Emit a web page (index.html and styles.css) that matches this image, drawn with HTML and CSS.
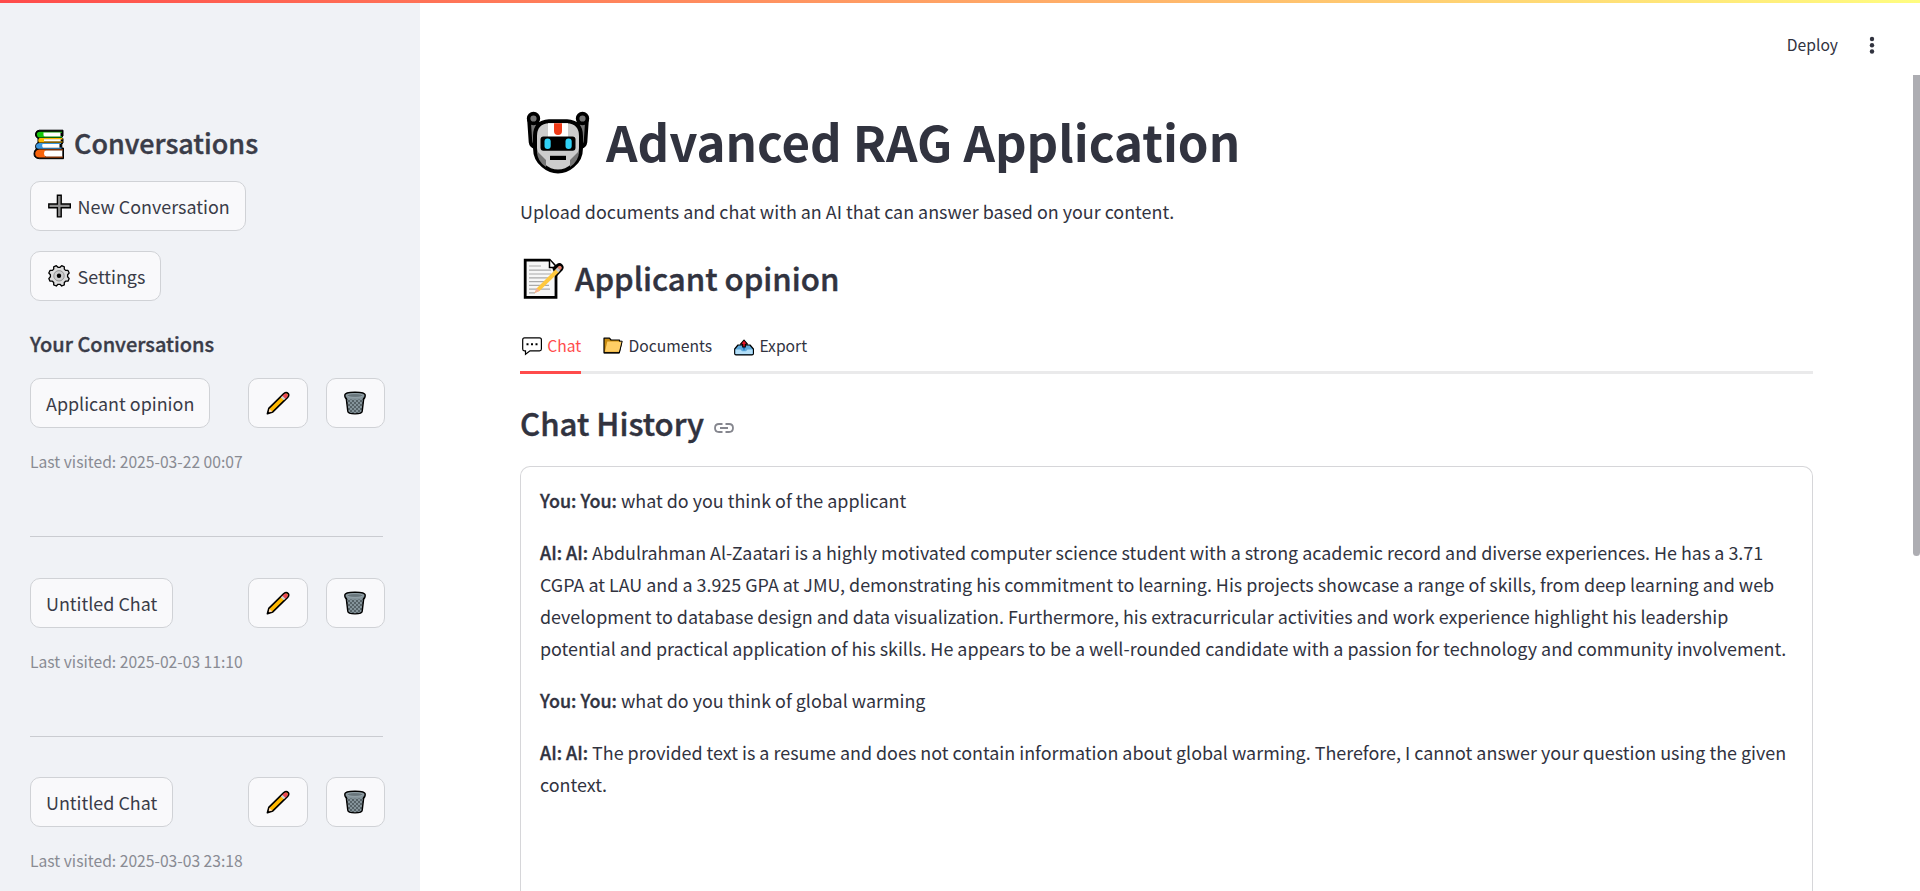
FILE: index.html
```html
<!DOCTYPE html>
<html lang="en">
<head>
<meta charset="utf-8">
<title>Advanced RAG Application</title>
<link rel="stylesheet" href="styles.css">
</head>
<body>
<svg class="defs" width="0" height="0" aria-hidden="true">
  <defs>
    <pattern id="mesh" width="4" height="4" patternUnits="userSpaceOnUse">
      <path d="M0 0L4 4M4 0L0 4" stroke="#4a555b" stroke-width=".8"/>
    </pattern>
    <symbol id="pencil" viewBox="0 0 24 24">
      <path d="M1.4 22.800L2.800 17.400 17.800 2.600Q20.300.800 22.200 2.500 23.500 4.300 21.600 6.400L6.800 20.900Z" fill="#ffb900" stroke="#000" stroke-width="1.600" stroke-linejoin="round"/>
      <path d="M16.300 5L18.300 3.100Q20 2 21.400 3.200 22.500 4.500 20.900 6.200L19.200 7.900Z" fill="#e74856"/>
      <path d="M14.800 6.400L16.400 4.900 19.400 7.800 17.800 9.300Z" fill="#ccd1d4"/>
      <path d="M2.500 21.400L3.500 17.900 6.300 20.500Z" fill="#ffd9b8"/>
      <path d="M1.200 22.900L1.900 20 4.100 22Z"/>
    </symbol>
    <symbol id="trash" viewBox="0 0 24 24">
      <path d="M3 5.5L4.8 20.3Q5 22.8 12 22.8T19.2 20.3L21 5.5Z" fill="#84939a"/>
      <path d="M3 8L4.800 20.300Q5 22.800 12 22.800T19.200 20.300L21 8Z" fill="url(#mesh)"/>
      <path d="M3.2 6.8L4.8 20.3Q5 22.9 12 22.9T19.2 20.3L20.8 6.8" fill="none" stroke="#000" stroke-width="1.4"/>
      <path d="M1.8 3.9Q2 1.2 12 1.2T22.2 3.9Q22.3 7.6 20 7.9 12 9.4 4 7.9 1.7 7.6 1.8 3.9Z" fill="#84939a"/>
      <path d="M4 8Q1.6 7.4 1.8 3.9 2 1.2 12 1.2T22.2 3.9Q22.3 7.4 20 8" fill="none" stroke="#000" stroke-width="1.4"/>
      <ellipse cx="12" cy="4.5" rx="8" ry="1.9" fill="#68757b" stroke="#a2b0b6" stroke-width=".7"/>
    </symbol>
  </defs>
</svg>

<div class="decoration"></div>

<div class="app">
  <aside class="sidebar">
    <h2 class="side-title">
      <svg class="books" viewBox="0 0 32 32">
        <path d="M6.2 1.2H30V7L28.8 8V9.5H30V14L28.8 15V19H30.5V29.7H6.5Q1 29.5 1 24.8 1 21.5 3.2 20 1.5 15.5 5 13.5V9.5Q2 8 2.4 4.8 3 1.4 6.2 1.2Z" fill="#000" stroke="#000" stroke-width="1"/>
        <path d="M29 2.8H7Q3.8 3 3.8 5.6 4 8.3 6.5 8.5H29V7.3H11V3.8H29Z" fill="#16c60c"/>
        <path d="M10.5 3.6H27.5V7.6H12Q10.5 7.6 10.5 6Z" fill="#fff"/>
        <path d="M29.500 9H6.500Q4.200 11 6 13.600H29.500V12.500H11V10.500H29.500Z" fill="#ffb900"/>
        <path d="M11 10.200H27.700V12.300H11Z" fill="#fff"/>
        <path d="M28 14H7Q3 14.3 3 17 3 19.8 5.5 19.8H28.5V18.6H10V15H28Z" fill="#3a96dd"/>
        <path d="M9.500 15H26.500V18.800H10Q8.500 17 9.500 15Z" fill="#fff"/>
        <path d="M29.8 20.5H6.5Q2.2 21 2.2 24.8 2.2 28.3 6.5 28.5H29.8V27.6H12V21.5H29.8Z" fill="#f7630c"/>
        <path d="M12.500 21.400H29.300V27.400H13Q11 26.800 11 24.400T12.500 21.400Z" fill="#fff"/>
      </svg>
      <span>Conversations</span>
    </h2>
    <button class="btn">
      <svg class="btn-icon" viewBox="0 0 26 26"><path d="M11.400 2.300H15.200V11H24.300V14.800H15.200V23.900H11.400V14.800H2.800V11H11.400Z" fill="#8e8e8e" stroke="#000" stroke-width="1.400"/></svg>
      <span>New Conversation</span>
    </button>
    <button class="btn">
      <svg class="btn-icon" viewBox="0 0 26 26">
        <path d="M10.3 2.7L12 4.3H14L15.7 2.7 18.3 3.8V6.1L19.6 7.4H22L23.2 10 21.6 11.8V13.8L23.2 15.6 22 18.2H19.6L18.3 19.5V21.9L15.7 23 14 21.3H12L10.3 23 7.7 21.9V19.5L6.4 18.2H4L2.8 15.6 4.4 13.8V11.8L2.8 10 4 7.4H6.4L7.7 6.1V3.8Z" fill="#dcdcdc" stroke="#000" stroke-width="1.3" stroke-linejoin="round"/>
        <circle cx="13" cy="12.8" r="5.2" fill="#ccc" stroke="#8b8b8b" stroke-width=".9"/>
        <circle cx="13" cy="12.8" r="2.2"/>
      </svg>
      <span>Settings</span>
    </button>
    <h3 class="side-sub">Your Conversations</h3>

    <section class="conv">
      <div class="conv-row">
        <div><button class="btn">Applicant opinion</button></div>
        <button class="btn icon-only"><svg viewBox="0 0 24 24"><use href="#pencil"/></svg></button>
        <button class="btn icon-only"><svg viewBox="0 0 24 24"><use href="#trash"/></svg></button>
      </div>
      <p class="caption">Last visited: 2025-03-22 00:07</p>
    </section>
    <section class="conv">
      <div class="conv-row">
        <div><button class="btn">Untitled Chat</button></div>
        <button class="btn icon-only"><svg viewBox="0 0 24 24"><use href="#pencil"/></svg></button>
        <button class="btn icon-only"><svg viewBox="0 0 24 24"><use href="#trash"/></svg></button>
      </div>
      <p class="caption">Last visited: 2025-02-03 11:10</p>
    </section>
    <section class="conv">
      <div class="conv-row">
        <div><button class="btn">Untitled Chat</button></div>
        <button class="btn icon-only"><svg viewBox="0 0 24 24"><use href="#pencil"/></svg></button>
        <button class="btn icon-only"><svg viewBox="0 0 24 24"><use href="#trash"/></svg></button>
      </div>
      <p class="caption">Last visited: 2025-03-03 23:18</p>
    </section>
  </aside>

  <div class="view">
    <header class="toolbar">
      <span>Deploy</span>
      <svg class="kebab" viewBox="0 0 6 18"><circle cx="3" cy="3" r="2.2"/><circle cx="3" cy="9.2" r="2.2"/><circle cx="3" cy="15.5" r="2.2"/></svg>
    </header>

    <main class="content">
      <h1 class="title">
        <svg class="robot" viewBox="0 0 64 64">
          <path d="M3 9L4.500 31Q5 35 9 36L14 34 12.500 15 10 8ZM61 9L59.500 31Q59 35 55 36L50 34 51.500 15 54 8Z" fill="#767676" stroke="#000" stroke-width="3.600" stroke-linejoin="round"/>
          <circle cx="7.500" cy="7.500" r="4.900" fill="#767676" stroke="#000" stroke-width="3.600"/>
          <circle cx="56.500" cy="7.500" r="4.900" fill="#767676" stroke="#000" stroke-width="3.600"/>
          <path d="M32 10.200H23Q9 11 9 25V37Q9 48 17 54.500 24 60.500 32 60.500T47 54.500Q55 48 55 37V25Q55 11 41 10.200Z" fill="#ccc" stroke="#000" stroke-width="4"/>
          <path d="M11 40L20 49V56Q11 50 11 40ZM53 40L44 49V56Q53 50 53 40Z" fill="#767676"/>
          <path d="M22 12.200H42V26H22Z" fill="#fff"/>
          <path d="M28 12.200H36V20Q36 24 32 24T28 20Z" fill="#f03a17"/>
          <rect x="14.500" y="25.500" width="35" height="14.300" rx="3"/>
          <rect x="18.500" y="27.500" width="6.200" height="10.500" rx="3" fill="#31d2f7"/>
          <rect x="39.500" y="27.500" width="6.200" height="10.500" rx="3" fill="#31d2f7"/>
          <rect x="24" y="44.800" width="16" height="4.200"/>
        </svg>
        <span>Advanced RAG Application</span>
      </h1>
      <p class="lead">Upload documents and chat with an AI that can answer based on your content.</p>
      <h2 class="heading">
        <svg class="memo" viewBox="0 0 42 42">
          <path d="M2.200 2.200H26.500L33 9V39.300H2.200Z" fill="#f7f7f7" stroke="#000" stroke-width="2.800"/>
          <path d="M26.500 2V9.500H33" fill="#fff" stroke="#000" stroke-width="1.500"/>
          <path d="M6 8H18M6 12.200H28M6 16H28M6 19.800H27M6 23.600H24M6 27.400H26M6 31.200H27M6 34.800H12" stroke="#aaa" stroke-width="1.200"/>
          <path d="M31 10.500L34.500 7.500Q36.500 5.800 38.300 7.500 40 9.300 38.300 11.500L33.500 16.500Z" fill="#000" stroke="#000" stroke-width="3" stroke-linejoin="round"/>
          <path d="M14 30L33.500 10.500 36.500 13.500 16.500 33 11.500 35Z" fill="#ffc83d"/>
          <path d="M11.500 35.200L13.700 30 16.500 32.800Z" fill="#f3ad9c"/>
          <path d="M32.500 11.500L34.700 9.300 37.500 12 35.300 14.200Z" fill="#c9c9c9"/>
          <path d="M34.500 9.500L35.500 8.300Q37 7 38.300 8.500T38.200 11L37.300 12Z" fill="#e8836b"/>
        </svg>
        <span>Applicant opinion</span>
      </h2>

      <nav class="tabs">
        <a class="tab active">
          <svg class="tab-icon" viewBox="0 0 22 20"><path d="M3.500 1.900H18.500Q20.400 1.900 20.400 3.800V13Q20.400 14.800 18.500 14.800H9L4.500 18.200V14.800H3.300Q1.700 14.800 1.700 13V3.800Q1.700 1.900 3.500 1.900Z" fill="#fff" stroke="#000" stroke-width="1.200"/><path d="M5.500 7.300h2v2h-2zM10 7.300h2v2h-2zM14.500 7.300h2v2h-2z"/></svg>
          <span>Chat</span>
        </a>
        <a class="tab">
          <svg class="tab-icon" viewBox="0 0 22 20"><path d="M2 2.200H7.500L9 4H17.500V7L18.700 6.500H19.500L17.200 16.800H2Z" fill="#c98c10" stroke="#000" stroke-width="1.200" stroke-linejoin="round"/><path d="M5.300 5.500H20.300L17.400 15.800H2.900Z" fill="#ffce65"/><path d="M17.500 5.200H20.200L17.300 16.800H2" fill="none" stroke="#000" stroke-width="1"/></svg>
          <span>Documents</span>
        </a>
        <a class="tab">
          <svg class="tab-icon" viewBox="0 0 22 20"><path d="M1.700 13L5 9H17L20.400 13V17.500Q20.400 18.900 19 18.900H3Q1.700 18.900 1.700 17.500Z" fill="#5ea9dc" stroke="#000" stroke-width="1.200" stroke-linejoin="round"/><path d="M2.500 13.500H7.500L9 15.300H13L14.500 13.500H19.600V18H2.500Z" fill="#b4dff8"/><path d="M9.200 10H12.800L11 15Z" fill="#1674c4"/><path d="M11 4L14.500 8.200H12.300V11H9.700V8.200H7.500Z" fill="#e81224" stroke="#000" stroke-width="1.100" stroke-linejoin="round"/></svg>
          <span>Export</span>
        </a>
      </nav>

      <h2 class="heading history">
        <span>Chat History</span>
        <svg class="link" viewBox="0 0 20 10"><path d="M8.500 1H5Q1 1 1 5T5 9H8.500M11.500 1H15Q19 1 19 5T15 9H11.500M6 5H14" fill="none" stroke="#85868e" stroke-width="1.800"/></svg>
      </h2>

      <section class="chat">
        <p><strong>You: You:</strong> what do you think of the applicant</p>
        <p><strong>AI: AI:</strong> Abdulrahman Al-Zaatari is a highly motivated computer science student with a strong academic record and diverse experiences. He has a 3.71 CGPA at LAU and a 3.925 GPA at JMU, demonstrating his commitment to learning. His projects showcase a range of skills, from deep learning and web development to database design and data visualization. Furthermore, his extracurricular activities and work experience highlight his leadership potential and practical application of his skills. He appears to be a well-rounded candidate with a passion for technology and community involvement.</p>
        <p><strong>You: You:</strong> what do you think of global warming</p>
        <p><strong>AI: AI:</strong> The provided text is a resume and does not contain information about global warming. Therefore, I cannot answer your question using the given context.</p>
      </section>
    </main>
    <div class="scroll-thumb"></div>
  </div>
</div>
</body>
</html>
```
FILE: styles.css
```css
* { box-sizing: border-box; }

body {
  margin: 0;
  height: 100vh;
  overflow: hidden;
  position: relative;
  background: #fff;
  color: #31333f;
  font-family: "Noto Sans CJK SC", "Noto Sans", sans-serif;
  font-size: 17.91px;
  line-height: 32px;
}

h1, h2, h3, p { margin: 0; }

svg { display: block; flex: none; }
.defs { position: absolute; }

.decoration {
  position: absolute;
  inset: 0 0 auto;
  height: 3px;
  background: linear-gradient(90deg, #ff4b4b, #fffd80);
  z-index: 2;
}

.app {
  display: grid;
  grid-template-columns: 420px 1fr;
  height: 100%;
}

/* Sidebar */
.sidebar {
  display: flex;
  flex-direction: column;
  align-items: flex-start;
  padding: 125px 0 0 30px;
  background: #f0f2f6;
  color: #3a3c48;
  overflow: hidden;
}

.side-title {
  display: flex;
  height: 36px;
  margin-bottom: 20px;
  font-size: 26.95px;
  font-weight: 500;
  line-height: 36px;
  -webkit-text-stroke: 0.4px currentColor;
}

.books {
  width: 32px;
  height: 32px;
  margin: 4px 9px 0 3px;
}

.btn {
  display: flex;
  align-items: center;
  gap: 5.5px;
  height: 50px;
  margin: 0;
  padding: 0 15px;
  border: 1px solid #d0d2d6;
  border-radius: 10px;
  background: #f9f9fb;
  color: inherit;
  font: inherit;
  white-space: nowrap;
}

.sidebar > .btn { margin-bottom: 20px; }
.btn-icon { width: 26px; height: 26px; }

.side-sub {
  margin: 9px 0 20px;
  font-size: 20px;
  font-weight: 500;
  line-height: 28px;
  -webkit-text-stroke: 0.35px currentColor;
}

.conv { width: 355px; }

.conv + .conv {
  width: 353px;
  margin-top: 62px;
  padding-top: 40.5px;
  border-top: 1px solid #caccd1;
}

.conv-row {
  display: grid;
  grid-template-columns: 200px 60px 59px;
  column-gap: 18px;
}

.icon-only {
  justify-content: center;
  padding: 0 1px 0 0;
}

.icon-only svg { width: 24px; height: 24px; }

.caption {
  margin-top: 22px;
  color: #898b93;
  font-size: 15.67px;
  line-height: 24px;
}

/* Main view */
.view {
  position: relative;
  overflow: hidden;
}

.toolbar {
  display: flex;
  align-items: center;
  justify-content: flex-end;
  gap: 31px;
  height: 75px;
  padding: 15px 45px 0 0;
  font-size: 15.67px;
}

.kebab { width: 6px; height: 18px; }
.kebab circle { fill: #31333f; }

.content {
  display: flex;
  flex-direction: column;
  width: 1293px;
  height: 816px;
  margin-left: 100px;
  padding-top: 33px;
}

.title {
  display: flex;
  height: 66px;
  margin-bottom: 21px;
  font-size: 49.2px;
  font-weight: 700;
  line-height: 66px;
}

.robot {
  width: 64px;
  height: 64px;
  margin: 3px 16px 0 6px;
}

.heading {
  display: flex;
  height: 42px;
  font-size: 31.2px;
  font-weight: 500;
  line-height: 42px;
  -webkit-text-stroke: 0.45px currentColor;
}

.lead { margin-bottom: 30px; }

.memo {
  width: 42px;
  height: 42px;
  margin: 1px 10px 0 3px;
}

.tabs {
  display: flex;
  gap: 20px;
  height: 54px;
  margin-top: 21px;
  box-shadow: inset 0 -3px #eaeaeb;
  font-size: 15.67px;
  line-height: 51px;
}

.tab {
  display: flex;
  gap: 4.3px;
  height: 54px;
}

.tab.active {
  color: #ff4b4b;
  box-shadow: inset 0 -3px #ff4b4b;
}

.tab-icon {
  width: 22px;
  height: 20px;
  margin: 16px 0 0 1px;
}

.history { margin: 28px 0 22px; }

.link {
  width: 20px;
  height: 10px;
  margin: 21px 0 0 10px;
}

.chat {
  display: flex;
  flex: 1;
  flex-direction: column;
  gap: 20px;
  padding: 17px 19px 0;
  border: 1px solid #d6d6d9;
  border-bottom: 0;
  border-radius: 10px 10px 0 0;
}

.chat strong {
  font-weight: 500;
  -webkit-text-stroke: 0.35px currentColor;
}

.scroll-thumb {
  position: absolute;
  top: 75px;
  right: 0;
  width: 7px;
  height: 481px;
  border-radius: 0 0 4px 4px;
  background: #adadb2;
}
```
